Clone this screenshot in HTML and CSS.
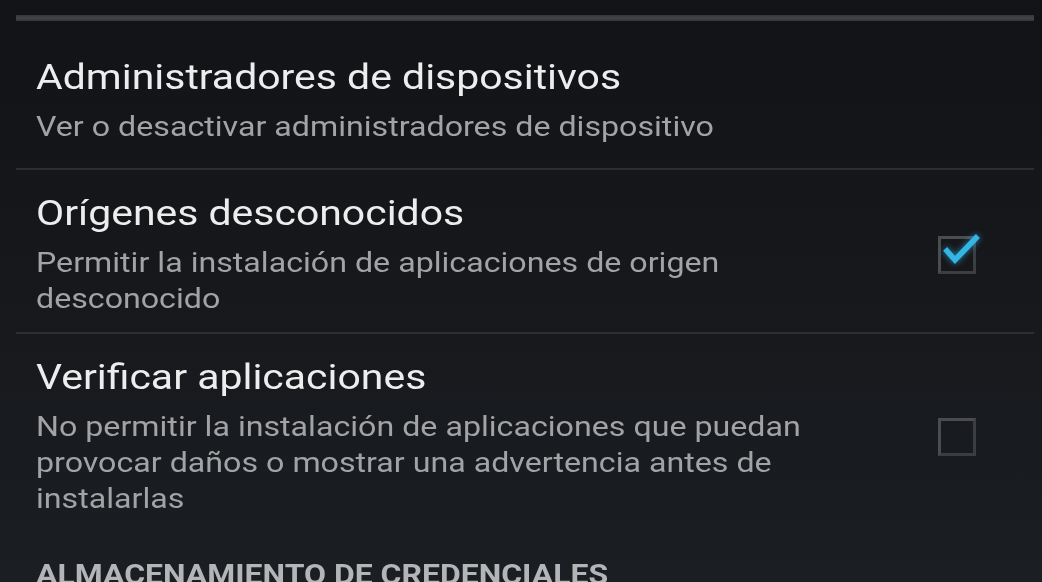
FILE: index.html
```html
<!DOCTYPE html>
<html lang="es">
<head>
<meta charset="utf-8">
<link rel="stylesheet" href="styles.css">
</head>
<body>
<div class="screen">
  <div class="top-rule"></div>
  <div class="pref first">
    <div class="text">
      <div class="title">Administradores de dispositivos</div>
      <div class="summary">Ver o desactivar administradores de dispositivo</div>
    </div>
  </div>
  <div class="pref">
    <div class="text">
      <div class="title">Orígenes desconocidos</div>
      <div class="summary">Permitir la instalación de aplicaciones de origen<br>desconocido</div>
    </div>
    <div class="check-col">
      <div class="checkbox">
        <svg class="tick" width="48" height="40" viewBox="0 0 48 40"><polyline points="9,18 17,27 38,5" fill="none" stroke="#33b5e5" stroke-width="5.5" stroke-linecap="square"/></svg>
      </div>
    </div>
  </div>
  <div class="pref last">
    <div class="text">
      <div class="title">Verificar aplicaciones</div>
      <div class="summary">No permitir la instalación de aplicaciones que puedan<br>provocar daños o mostrar una advertencia antes de<br>instalarlas</div>
    </div>
    <div class="check-col">
      <div class="checkbox"></div>
    </div>
  </div>
  <div class="section">ALMACENAMIENTO DE CREDENCIALES</div>
</div>
</body>
</html>
```
FILE: styles.css
```css
html, body {
  margin: 0;
  padding: 0;
  height: 582px;
  overflow: hidden;
}
body {
  background: linear-gradient(180deg, #111316 0%, #16181c 50%, #1b1e22 100%);
  font-family: Roboto, "Noto Sans", sans-serif;
}
.screen {
  display: flex;
  flex-direction: column;
}
.top-rule {
  height: 6px;
  margin: 15px 8px 0 16px;
  background: linear-gradient(180deg, #353638 0%, #434447 50%, #353638 100%);
}
.pref {
  display: flex;
  align-items: center;
  margin: 0 8px 0 16px;
  padding: 22px 0 15px 20px;
  border-bottom: 2px solid #2c2e31;
}
.pref.first {
  padding-top: 35px;
  padding-bottom: 23px;
}
.pref.last {
  padding-bottom: 0;
  border-bottom: none;
}
.text {
  flex: 1;
  display: flex;
  flex-direction: column;
  white-space: nowrap;
  transform: scaleX(1.17);
  transform-origin: left center;
}
.title {
  color: #ededed;
  font-size: 35px;
  line-height: 44px;
}
.summary {
  margin-top: 9px;
  color: #a2a3a5;
  font-size: 27.5px;
  line-height: 36px;
}
.check-col {
  width: 96px;
  display: flex;
  justify-content: flex-start;
}
.checkbox {
  position: relative;
  width: 32px;
  height: 32px;
  border: 3px solid #4b4c4f;
  border-right-color: #3c3d40;
  border-bottom-color: #3c3d40;
}
.tick {
  position: absolute;
  left: -3px;
  top: -6px;
  filter: drop-shadow(0 0 3px rgba(51, 181, 229, 0.7));
}
.section {
  margin: 40px 0 0 36px;
  color: #b4b5b7;
  font-size: 27.3px;
  font-weight: 700;
  line-height: 36px;
  white-space: nowrap;
  transform: scaleX(1.17);
  transform-origin: left center;
}
```
